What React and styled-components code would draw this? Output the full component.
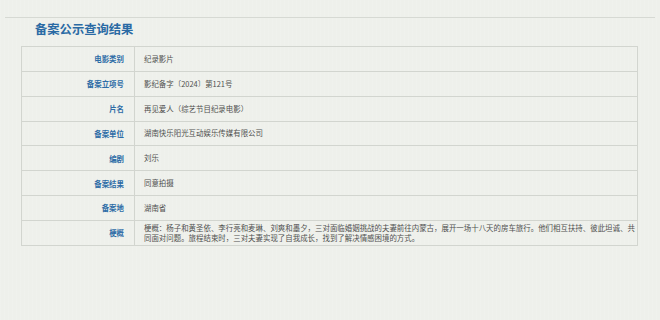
import React from 'react';
import styled, { createGlobalStyle } from 'styled-components';

const GlobalStyle = createGlobalStyle`
  html, body {
    margin: 0;
    padding: 0;
    background: #eef0eb;
  }
  body {
    font-family: "Noto Sans CJK SC", "Noto Sans", sans-serif;
  }
`;

const Page = styled.div`
  width: 660px;
  height: 320px;
  padding-top: 17px;
  box-sizing: border-box;
  background:
    repeating-linear-gradient(90deg, rgba(255,255,255,0.1) 0 1px, transparent 1px 4px),
    #eef0eb;
`;

const Panel = styled.div`
  margin: 0 5px;
  border-top: 1px solid #d6d9d3;
  padding: 3px 17px 0 16px;
`;

const Title = styled.h2`
  margin: 0 0 0 14px;
  height: 25px;
  font-size: 12.3px;
  line-height: 16px;
  font-weight: 700;
  color: #2a6aa4;
`;

const Table = styled.div`
  border: 1px solid #d2d5cf;
  border-bottom: none;
`;

const Row = styled.div`
  display: flex;
  min-height: 23.85px;
  border-bottom: 1px solid #d2d5cf;
`;

const Label = styled.div`
  width: 102px;
  flex: none;
  padding-right: 10px;
  border-right: 1px solid #d2d5cf;
  display: flex;
  align-items: center;
  justify-content: flex-end;
  font-size: 7.45px;
  font-weight: 700;
  color: #2d6ca6;
`;

const Value = styled.div`
  flex: 1;
  min-width: 0;
  padding: ${p => (p.multi ? '2px 0 2px 9px' : '0 0 0 9px')};
  display: flex;
  align-items: center;
  font-size: 7.45px;
  line-height: ${p => (p.multi ? '10px' : '12px')};
  color: #505050;
`;

const Text = styled.p`
  margin: 0;
  width: 100%;
`;

const rows = [
  ['电影类别', '纪录影片'],
  ['备案立项号', '影纪备字〔2024〕第121号'],
  ['片名', '再见爱人（综艺节目纪录电影）'],
  ['备案单位', '湖南快乐阳光互动娱乐传媒有限公司'],
  ['编剧', '刘乐'],
  ['备案结果', '同意拍摄'],
  ['备案地', '湖南省'],
  ['梗概', '梗概：杨子和黄圣依、李行亮和麦琳、刘爽和墨夕，三对面临婚姻挑战的夫妻前往内蒙古，展开一场十八天的房车旅行。他们相互扶持、彼此坦诚、共同面对问题。旅程结束时，三对夫妻实现了自我成长，找到了解决情感困境的方式。', true],
];

export default function App() {
  return (
    <Page>
      <GlobalStyle />
      <Panel>
        <Title>备案公示查询结果</Title>
        <Table>
          {rows.map(([label, value, multi]) => (
            <Row key={label}>
              <Label>{label}</Label>
              <Value multi={multi}>
                <Text>{value}</Text>
              </Value>
            </Row>
          ))}
        </Table>
      </Panel>
    </Page>
  );
}
